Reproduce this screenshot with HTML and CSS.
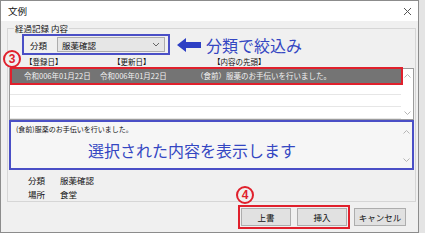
FILE: index.html
```html
<!DOCTYPE html>
<html lang="ja">
<head>
    <meta charset="UTF-8">
    <title>文例</title>
    <link rel="stylesheet" href="styles.css">
</head>
<body>
<div class="window">
    <div class="titlebar">
        <span class="title">文例</span>
        <svg class="close" width="9" height="9" viewBox="0 0 9 9"><path d="M1 1L8 8M8 1L1 8" stroke="#555" stroke-width="1"/></svg>
    </div>

    <fieldset class="group">
        <legend>経過記録 内容</legend>

        <div class="filter-line">
            <div class="filter-box">
                <span class="lbl">分類</span>
                <div class="combo">
                    <span>服薬確認</span>
                    <svg width="8" height="5" viewBox="0 0 8 5"><path d="M1 1L4 4L7 1" fill="none" stroke="#666" stroke-width="1"/></svg>
                </div>
            </div>
            <svg class="arrow" width="24" height="14" viewBox="0 0 24 14"><path d="M0 7L9 0V4H24V10H9V14Z" fill="#2d3fc4"/></svg>
            <span class="note">分類で絞込み</span>
        </div>

        <div class="list-head">
            <span class="c1">【登録日】</span>
            <span class="c2">【更新日】</span>
            <span>【内容の先頭】</span>
        </div>

        <div class="list">
            <div class="rows">
                <div class="row sel">
                    <span class="c1">令和006年01月22日</span>
                    <span class="c2">令和006年01月22日</span>
                    <span>（食前）服薬のお手伝いを行いました。</span>
                </div>
                <div class="row"></div>
                <div class="row"></div>
                <div class="row"></div>
            </div>
            <div class="vscroll">
                <svg width="7" height="4" viewBox="0 0 7 4"><path d="M0.5 3.5L3.5 0.5L6.5 3.5" fill="none" stroke="#b5b5b5"/></svg>
                <svg width="7" height="4" viewBox="0 0 7 4"><path d="M0.5 0.5L3.5 3.5L6.5 0.5" fill="none" stroke="#b5b5b5"/></svg>
            </div>
        </div>

        <div class="memo">
            <div class="memo-body">
                <div class="memo-text">(食前)服薬のお手伝いを行いました。</div>
                <div class="memo-note">選択された内容を表示します</div>
            </div>
            <div class="vscroll">
                <svg width="7" height="4" viewBox="0 0 7 4"><path d="M0.5 3.5L3.5 0.5L6.5 3.5" fill="none" stroke="#b5b5b5"/></svg>
                <svg width="7" height="4" viewBox="0 0 7 4"><path d="M0.5 0.5L3.5 3.5L6.5 0.5" fill="none" stroke="#b5b5b5"/></svg>
            </div>
        </div>

        <div class="info">
            <div class="info-row"><span class="k">分類</span><span>服薬確認</span></div>
            <div class="info-row"><span class="k">場所</span><span>食堂</span></div>
        </div>
    </fieldset>

    <div class="buttons">
        <div class="btn-group">
            <span class="mark mark4">4</span>
            <button>上書</button>
            <button>挿入</button>
        </div>
        <button class="cancel">キャンセル</button>
    </div>

    <span class="mark mark3">3</span>
</div>
</body>
</html>
```

FILE: styles.css
```css
body, div, span, fieldset, legend, button {
    margin: 0;
    padding: 0;
}

body {
    background: #e4e4e4;
    font-family: "Noto Sans CJK JP", "Noto Sans", sans-serif;
    color: #111;
}

.window {
    position: relative;
    box-sizing: border-box;
    width: 419px;
    height: 233px;
    border: 1px solid #8c8c8c;
    background: #f0f0f0;
    display: flex;
    flex-direction: column;
}

.titlebar {
    height: 20px;
    background: #fff;
    display: flex;
    align-items: center;
    justify-content: space-between;
    padding: 0 6px 0 7px;
}

.title {
    font-size: 9.5px;
    line-height: 12px;
}

.close {
    margin-top: 1px;
}

.group {
    margin: 1px 2px 0 6px;
    padding: 0 1px;
    border: 1px solid #d6d6d6;
    min-width: 0;
}

.group legend {
    margin-left: 5px;
    padding: 0 1px;
    font-size: 8.5px;
    line-height: 12px;
}

.filter-line {
    display: flex;
    align-items: center;
    height: 21px;
}

.filter-box {
    box-sizing: border-box;
    margin-left: 13px;
    width: 148px;
    height: 21px;
    border: 2px solid #4a4fc6;
    display: flex;
    align-items: center;
    padding-left: 6px;
}

.lbl {
    width: 27px;
    font-size: 8.5px;
    line-height: 12px;
}

.combo {
    box-sizing: border-box;
    width: 108px;
    height: 15px;
    border: 1px solid #adadad;
    background: #e6e6e6;
    display: flex;
    align-items: center;
    justify-content: space-between;
    padding: 0 4px 0 4px;
    font-size: 8.5px;
    line-height: 12px;
}

.arrow {
    margin-left: 7px;
}

.note {
    margin-left: 5px;
    font-size: 16px;
    line-height: 20px;
    color: #3446c2;
}

.list-head {
    display: flex;
    height: 12px;
    margin-top: 1px;
    padding-left: 16px;
    font-size: 7.5px;
    line-height: 12px;
}

.list-head .c1 {
    width: 88px;
}

.list-head .c2 {
    width: 100px;
}

.list {
    box-sizing: border-box;
    height: 52px;
    border: 1px solid #9c9c9c;
    background: #fff;
    display: flex;
}

.rows {
    flex: 1;
}

.row {
    box-sizing: border-box;
    height: 12px;
    border-bottom: 1px solid #e6e6e6;
}

.row.sel {
    height: 14px;
    margin: 0 0 0 2px;
    border-bottom: 0;
    background: #747474;
    outline: 2px solid #e0202c;
    color: #f2f2f2;
    display: flex;
    align-items: center;
    padding-left: 12px;
    font-size: 7.5px;
    line-height: 12px;
    white-space: nowrap;
}

.row.sel .c1 {
    width: 76px;
}

.row.sel .c2 {
    width: 96px;
}

.vscroll {
    width: 12px;
    display: flex;
    flex-direction: column;
    align-items: center;
    justify-content: space-between;
    padding: 5px 0 4px;
}

.memo {
    box-sizing: border-box;
    height: 50px;
    border: 2px solid #4a4fc6;
    background: #f6f6f6;
    display: flex;
}

.memo-body {
    flex: 1;
    padding: 2px 0 0 5px;
}

.memo-text {
    font-size: 7px;
    line-height: 11px;
}

.memo-note {
    margin: 5px 0 0 72px;
    font-size: 16px;
    line-height: 20px;
    color: #3446c2;
}

.memo .vscroll {
    padding: 8px 0 6px;
}

.info {
    padding: 3px 0 0 19px;
}

.info-row {
    display: flex;
    height: 14px;
    align-items: center;
    font-size: 8.5px;
    line-height: 12px;
}

.info-row .k {
    width: 32px;
}

.buttons {
    display: flex;
    justify-content: flex-end;
    align-items: center;
    gap: 4px;
    margin-top: 3px;
    padding-right: 12px;
}

.btn-group {
    position: relative;
    display: flex;
    gap: 6px;
    border: 2px solid #e0202c;
    padding: 1px;
}

button {
    box-sizing: border-box;
    width: 50px;
    height: 18px;
    border: 1px solid #adadad;
    background: #e1e1e1;
    font-family: "Noto Sans CJK JP", "Noto Sans", sans-serif;
    font-size: 8.5px;
    line-height: 12px;
    color: #111;
}

.cancel {
    width: 52px;
}

.mark {
    position: absolute;
    box-sizing: border-box;
    width: 18px;
    height: 18px;
    border: 2px solid #e0202c;
    border-radius: 50%;
    color: #e0202c;
    font-family: "Liberation Sans", sans-serif;
    font-weight: bold;
    font-size: 12px;
    line-height: 14px;
    text-align: center;
    background: #f0f0f0;
}

.mark3 {
    left: 2px;
    top: 49px;
}

.mark4 {
    left: -4px;
    top: -21px;
}
```
